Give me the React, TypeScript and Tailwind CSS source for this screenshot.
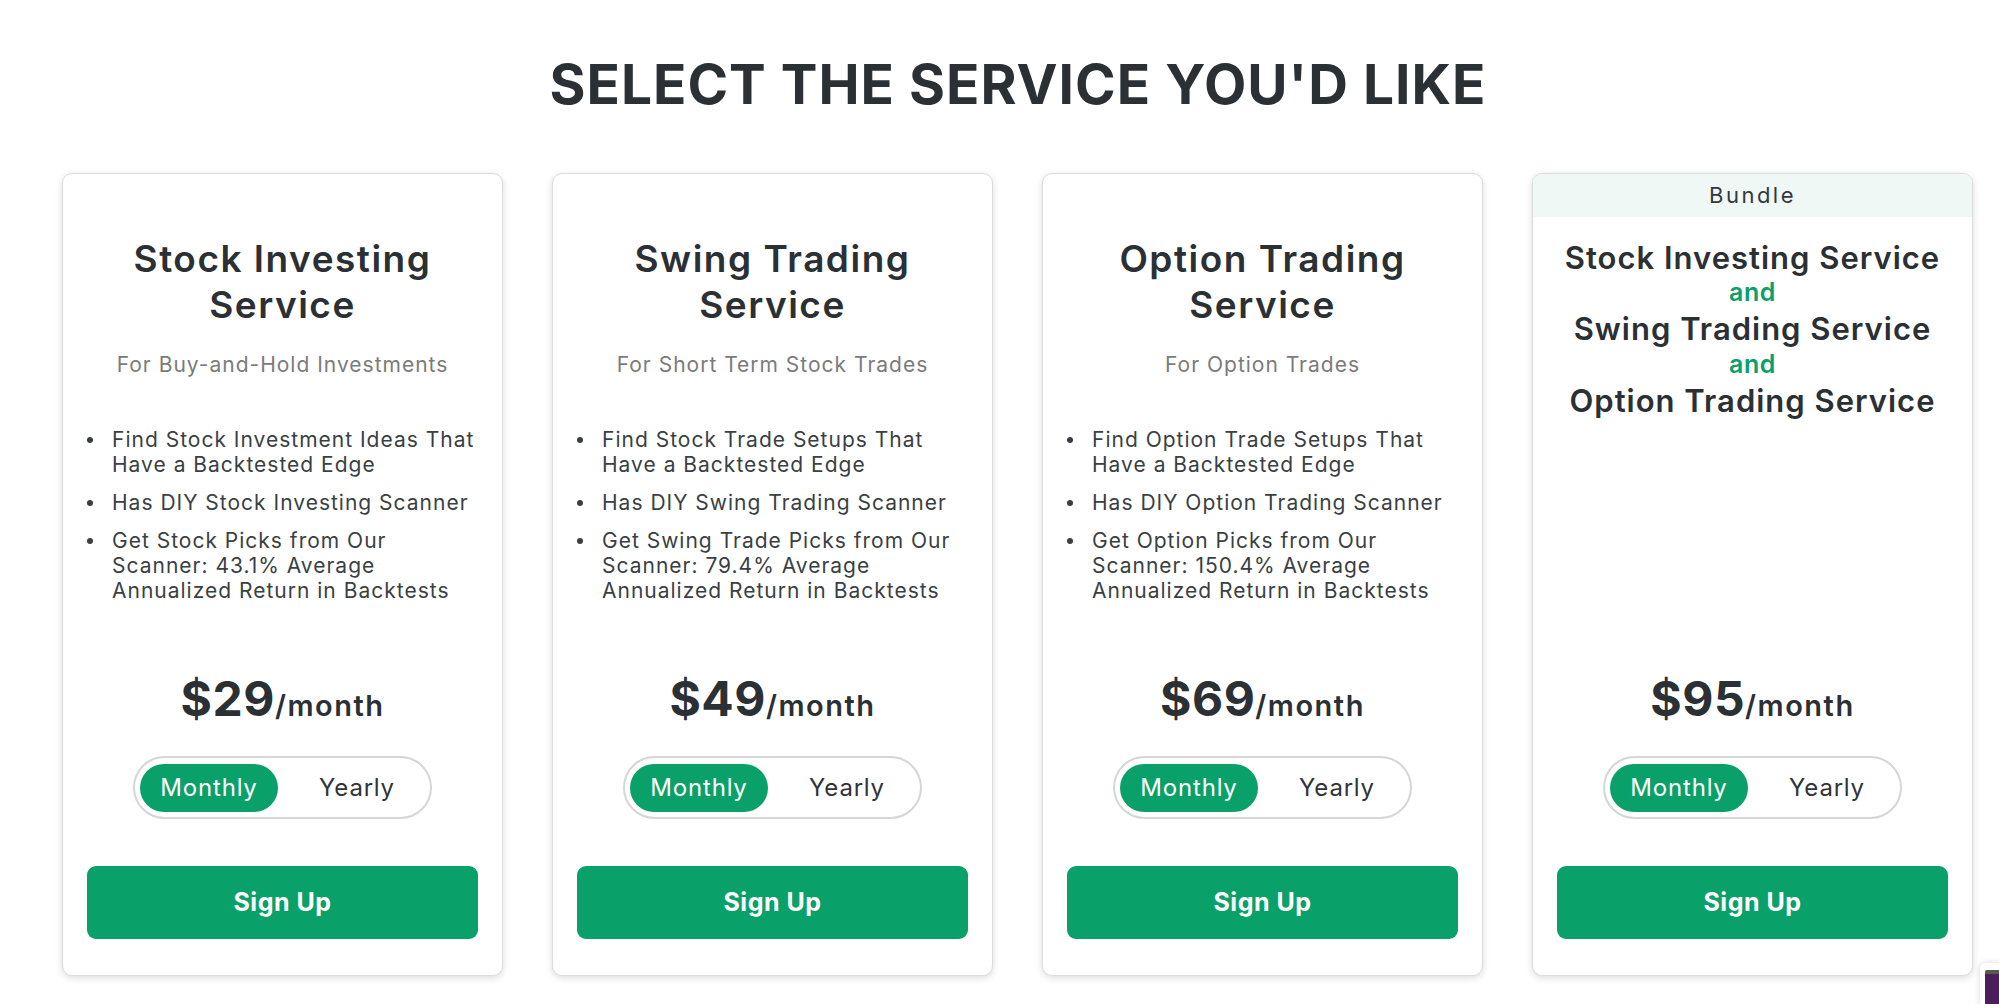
import React from "react";

const FONT = { fontFamily: "Inter, 'Noto Sans', sans-serif" };

type Plan = {
  title: string[];
  subtitle: string;
  bullets: string[][];
  price: string;
};

const plans: Plan[] = [
  {
    title: ["Stock Investing", "Service"],
    subtitle: "For Buy-and-Hold Investments",
    bullets: [
      ["Find Stock Investment Ideas That", "Have a Backtested Edge"],
      ["Has DIY Stock Investing Scanner"],
      ["Get Stock Picks from Our", "Scanner: 43.1% Average", "Annualized Return in Backtests"],
    ],
    price: "$29",
  },
  {
    title: ["Swing Trading", "Service"],
    subtitle: "For Short Term Stock Trades",
    bullets: [
      ["Find Stock Trade Setups That", "Have a Backtested Edge"],
      ["Has DIY Swing Trading Scanner"],
      ["Get Swing Trade Picks from Our", "Scanner: 79.4% Average", "Annualized Return in Backtests"],
    ],
    price: "$49",
  },
  {
    title: ["Option Trading", "Service"],
    subtitle: "For Option Trades",
    bullets: [
      ["Find Option Trade Setups That", "Have a Backtested Edge"],
      ["Has DIY Option Trading Scanner"],
      ["Get Option Picks from Our", "Scanner: 150.4% Average", "Annualized Return in Backtests"],
    ],
    price: "$69",
  },
];

function Bottom({ price }: { price: string }) {
  return (
    <div className="mt-auto flex flex-col items-center">
      <div className="flex items-baseline text-[#2a3034]">
        <span className="text-[48px] font-bold leading-none tracking-[0.5px]">{price}</span>
        <span className="text-[29px] font-semibold leading-none tracking-[1.5px]">/month</span>
      </div>
      <div className="mt-[33px] flex h-[63px] w-[299px] items-center rounded-full border-2 border-[#d6d6d6] bg-white px-[5px]">
        <div className="flex h-[48px] w-[138px] items-center justify-center rounded-full bg-[#09a069] text-[24px] tracking-[0.8px] text-white">
          Monthly
        </div>
        <div className="flex flex-1 items-center justify-center pl-[11px] text-[24px] tracking-[0.8px] text-[#2f3438]">
          Yearly
        </div>
      </div>
      <button className="mt-[47px] flex h-[73px] w-full items-center justify-center rounded-[9px] bg-[#09a069] text-[25px] font-bold tracking-[0.5px] text-white">
        Sign Up
      </button>
    </div>
  );
}

function PlanCard({ plan }: { plan: Plan }) {
  return (
    <div className="flex h-[803px] w-[441px] flex-col rounded-[10px] border border-[#dcdcdc] bg-white px-6 pb-[36px] shadow-[0_2px_7px_rgba(0,0,0,0.14)]">
      <h2 className="mt-[62px] whitespace-nowrap text-center text-[37px] font-semibold leading-[46px] tracking-[1.5px] text-[#2a3034]">
        {plan.title.map((t) => (
          <div key={t}>{t}</div>
        ))}
      </h2>
      <p className="mt-[23px] whitespace-nowrap text-center text-[21px] leading-[28px] tracking-[1px] text-[#7b7b7b]">
        {plan.subtitle}
      </p>
      <ul className="mt-[48px] flex flex-col gap-[13px] whitespace-nowrap pl-[25px] text-[21px] leading-[25px] tracking-[1px] text-[#3a3f43]">
        {plan.bullets.map((b, i) => (
          <li key={i} className="relative">
            <span className="absolute left-[-25px] top-[10px] h-[6px] w-[6px] rounded-full bg-[#3a3f43]" />
            {b.map((l, j) => (
              <div key={j}>{l}</div>
            ))}
          </li>
        ))}
      </ul>
      <Bottom price={plan.price} />
    </div>
  );
}

function BundleCard() {
  return (
    <div className="flex h-[803px] w-[441px] flex-col overflow-hidden rounded-[10px] border border-[#dcdcdc] bg-white pb-[36px] shadow-[0_2px_7px_rgba(0,0,0,0.14)]">
      <div className="flex h-[43px] items-center justify-center bg-[#eff8f4] text-[22px] tracking-[2.5px] text-[#33383c]">
        Bundle
      </div>
      <div className="mt-[21px] flex flex-col items-center whitespace-nowrap text-center">
        <div className="text-[31px] font-semibold leading-[40px] tracking-[1px] text-[#2a3034]">Stock Investing Service</div>
        <div className="mb-[3px] text-[25px] font-semibold leading-[28px] tracking-[0.5px] text-[#09a069]">and</div>
        <div className="text-[31px] font-semibold leading-[40px] tracking-[1px] text-[#2a3034]">Swing Trading Service</div>
        <div className="mb-[3px] mt-[1px] text-[25px] font-semibold leading-[28px] tracking-[0.5px] text-[#09a069]">and</div>
        <div className="text-[31px] font-semibold leading-[40px] tracking-[1px] text-[#2a3034]">Option Trading Service</div>
      </div>
      <div className="mt-auto flex flex-col px-6">
        <Bottom price="$95" />
      </div>
    </div>
  );
}

export default function App() {
  return (
    <div style={FONT} className="relative min-h-[1004px] w-full overflow-hidden bg-white">
      <h1 className="pl-[37px] pt-[57px] text-center text-[55px] font-bold leading-[55px] tracking-[1px] text-[#2a3034]">
        SELECT THE SERVICE YOU'D LIKE
      </h1>
      <div className="ml-[62px] mt-[61px] flex gap-[49px]">
        {plans.map((p) => (
          <PlanCard key={p.price} plan={p} />
        ))}
        <BundleCard />
      </div>
      <div className="absolute left-[1980px] top-[963px] h-[60px] w-[40px] rounded-tl-[6px] bg-white pl-[5px] pt-[7px] shadow-[0_0_6px_rgba(0,0,0,0.15)]">
        <div className="h-[40px] w-[20px] rounded-[2px] border-t-[4px] border-[#5a5a4a] bg-[#4b1f5e]" />
      </div>
    </div>
  );
}
